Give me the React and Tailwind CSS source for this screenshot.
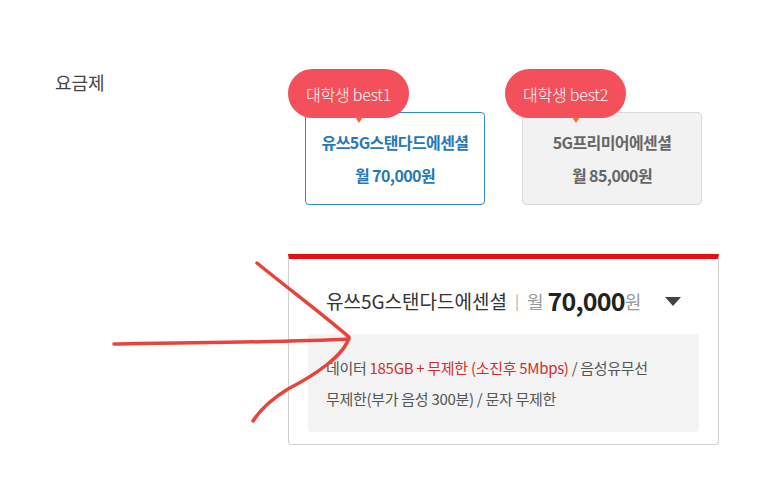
import React from 'react';

const font = { fontFamily: '"Noto Sans CJK KR", "Noto Sans", sans-serif' };

function PlanCard({ badge, name, price, active }) {
  return (
    <div className="relative pt-[43px] pl-[17px]">
      <div
        className={
          'w-[180px] h-[93px] rounded-[4px] flex flex-col items-center justify-center gap-[13px] text-[16px] font-bold tracking-[-0.6px] leading-[20px] ' +
          (active
            ? 'border-[1.5px] border-[#2f8cc6] bg-white text-[#2479b6]'
            : 'border-[1.5px] border-[#d9d9d9] bg-[#f2f2f2] text-[#666666]')
        }
      >
        <div>{name}</div>
        <div>월 {price}원</div>
      </div>
      {/* badge */}
      <div className="absolute top-0 left-0 w-[121px] h-[49px] rounded-full bg-[#f4505b] flex items-center justify-center text-white text-[16px] font-light tracking-[-0.2px]">
        {badge}
      </div>
      <div className="absolute top-[48px] left-[67px] w-0 h-0 border-l-[4px] border-r-[4px] border-t-[6px] border-l-transparent border-r-transparent border-t-[#ef6a33]"></div>
    </div>
  );
}

export default function App() {
  return (
    <div className="relative w-[773px] h-[488px] bg-white overflow-hidden" style={font}>
      <div className="flex pt-[69px] pl-[55px]">
        <div className="w-[233px] pt-[1px] text-[18px] leading-[24px] text-[#444444]">요금제</div>

        <div className="flex flex-col">
          <div className="flex gap-[20px]">
            <PlanCard badge="대학생 best1" name="유쓰5G스탠다드에센셜" price="70,000" active />
            <PlanCard badge="대학생 best2" name="5G프리미어에센셜" price="85,000" />
          </div>

          {/* selected plan panel */}
          <div className="mt-[49px] w-[431px] border-t-[5px] border-t-[#e50f14] border-x border-b border-[#cfcfcf] rounded-b-[4px] pb-[12px]">
            <div className="flex items-center h-[26px] mt-[29px] pl-[37px] pr-[37px] text-[#333333]">
              <span className="text-[19px] tracking-[0px]">유쓰5G스탠다드에센셜</span>
              <span className="mx-[8px] text-[15px] text-[#aaaaaa]">|</span>
              <span className="text-[18px] text-[#999999]">월</span>
              <span className="ml-[4px] text-[25px] font-bold tracking-[-0.8px] text-[#222222]">70,000</span>
              <span className="text-[18px] text-[#999999]">원</span>
              <svg className="ml-auto" width="16" height="9" viewBox="0 0 16 9">
                <path d="M0 0 H16 L8 9 Z" fill="#444444" />
              </svg>
            </div>
            <div className="mt-[20px] mx-[19px] rounded-[4px] bg-[#f3f3f3] px-[18px] py-[18px] text-[15px] leading-[31px] text-[#555555] tracking-[-0.3px]">
              <div>
                데이터 <span className="text-[#d22e2e]">185GB + 무제한 (소진후 5Mbps)</span> / 음성유무선
              </div>
              <div>무제한(부가 음성 300분) / 문자 무제한</div>
            </div>
          </div>
        </div>
      </div>

      {/* hand-drawn arrow */}
      <svg className="absolute inset-0 pointer-events-none" width="773" height="488" viewBox="0 0 773 488">
        <g fill="none" stroke="#e8433b" strokeWidth="3.5" strokeLinecap="round" strokeLinejoin="round">
          <path d="M114 344 C 200 343, 290 342, 349 339" />
          <path d="M257 263 C 290 290, 320 312, 349 337 C 345 355, 315 375, 288 389 C 270 400, 260 410, 253 421" />
        </g>
      </svg>
    </div>
  );
}
